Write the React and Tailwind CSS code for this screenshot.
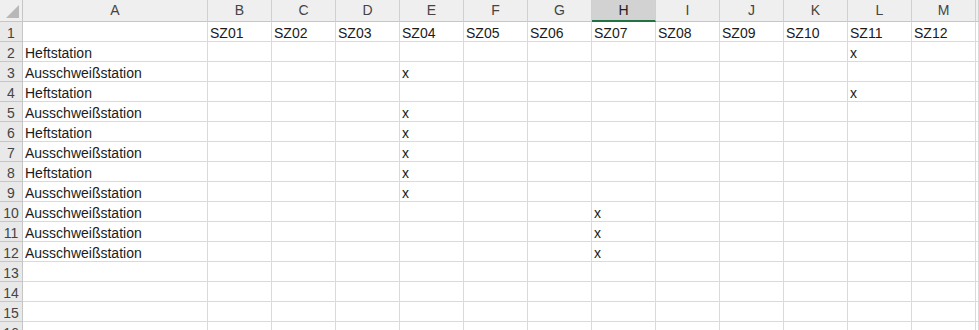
const columns = ["A", "B", "C", "D", "E", "F", "G", "H", "I", "J", "K", "L", "M", ""];

const rows = [
    { a: "", marks: {} },
    { a: "Heftstation", marks: { L: "x" } },
    { a: "Ausschweißstation", marks: { E: "x" } },
    { a: "Heftstation", marks: { L: "x" } },
    { a: "Ausschweißstation", marks: { E: "x" } },
    { a: "Heftstation", marks: { E: "x" } },
    { a: "Ausschweißstation", marks: { E: "x" } },
    { a: "Heftstation", marks: { E: "x" } },
    { a: "Ausschweißstation", marks: { E: "x" } },
    { a: "Ausschweißstation", marks: { H: "x" } },
    { a: "Ausschweißstation", marks: { H: "x" } },
    { a: "Ausschweißstation", marks: { H: "x" } },
    { a: "", marks: {} },
    { a: "", marks: {} },
    { a: "", marks: {} },
    { a: "", marks: {} },
];

// row 1 holds the SZ headers
const headerRow = { B: "SZ01", C: "SZ02", D: "SZ03", E: "SZ04", F: "SZ05", G: "SZ06", H: "SZ07", I: "SZ08", J: "SZ09", K: "SZ10", L: "SZ11", M: "SZ12" };

const gridCols = "grid-cols-[23px_185px_repeat(12,64px)_1fr]";

const ColumnHeader = ({ letter }) => {
    const selected = letter === "H";
    return (
        <div
            className={`flex h-[22px] items-center justify-center border-r border-[#d0d0d0] text-[14px] ${
                selected
                    ? "border-b-2 border-b-[#217346] bg-[#d2d2d2] text-[#222]"
                    : "border-b border-b-[#c6c6c6] bg-[#efefef] text-[#444]"
            }`}
        >
            {letter}
        </div>
    );
};

const Cell = ({ children }) => (
    <div className="flex h-5 items-end overflow-hidden whitespace-nowrap border-b border-r border-[#dadada] pl-[2px] text-[14px] leading-[15px] text-[#1b1b1b]">
        {children}
    </div>
);

export default function App() {
    return (
        <div className="h-[330px] w-[979px] overflow-hidden bg-white font-['Liberation_Sans',Arial,sans-serif]">
            <div className={`grid ${gridCols}`}>
                <div className="relative h-[22px] border-b border-r border-[#c6c6c6] bg-[#efefef]">
                    <svg className="absolute bottom-[3px] right-[3px]" width="13" height="13" viewBox="0 0 13 13">
                        <polygon points="13,0 13,13 0,13" fill="#b8b8b8" />
                    </svg>
                </div>
                {columns.map((c, i) => (
                    <ColumnHeader key={i} letter={c} />
                ))}

                {rows.map((row, r) => (
                    <div key={r} className="contents">
                        <div className="flex h-5 items-end justify-center border-b border-r border-[#c6c6c6] bg-[#e9e9e9] text-[14px] leading-[15px] text-[#444]">
                            {r + 1}
                        </div>
                        <Cell>{row.a}</Cell>
                        {columns.slice(1).map((c, i) => (
                            <Cell key={i}>{r === 0 ? headerRow[c] : row.marks[c]}</Cell>
                        ))}
                    </div>
                ))}
            </div>
        </div>
    );
}
